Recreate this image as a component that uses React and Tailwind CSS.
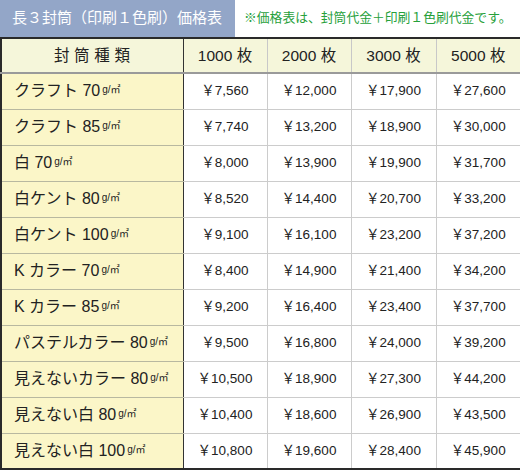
import React from 'react';

const rows = [
  ['クラフト 70', ['7,560', '12,000', '17,900', '27,600']],
  ['クラフト 85', ['7,740', '13,200', '18,900', '30,000']],
  ['白 70', ['8,000', '13,900', '19,900', '31,700']],
  ['白ケント 80', ['8,520', '14,400', '20,700', '33,200']],
  ['白ケント 100', ['9,100', '16,100', '23,200', '37,200']],
  ['K カラー 70', ['8,400', '14,900', '21,400', '34,200']],
  ['K カラー 85', ['9,200', '16,400', '23,400', '37,700']],
  ['パステルカラー 80', ['9,500', '16,800', '24,000', '39,200']],
  ['見えないカラー 80', ['10,500', '18,900', '27,300', '44,200']],
  ['見えない白 80', ['10,400', '18,600', '26,900', '43,500']],
  ['見えない白 100', ['10,800', '19,600', '28,400', '45,900']],
];

const font = { fontFamily: '"Liberation Sans", "Noto Sans CJK JP", sans-serif' };

const App = () => {
  return (
    <div className="w-[520px] h-[473px] bg-white text-[#222]" style={font}>
      <div className="flex items-center h-[37px]">
        <div className="w-[235px] shrink-0 h-full bg-[#93a6c8] text-white text-[15px] flex items-center pl-[12px] whitespace-nowrap">
          長３封筒（印刷１色刷）価格表
        </div>
        <div className="pl-[9px] pb-[2px] text-[12.8px] text-[#26a03a] whitespace-nowrap">
          ※価格表は、封筒代金＋印刷１色刷代金です。
        </div>
      </div>
      <table className="w-[520px] table-fixed border-collapse border-2 border-[#2a2a2a]">
        <colgroup>
          <col className="w-[182px]" />
          <col className="w-[84px]" />
          <col className="w-[84px]" />
          <col className="w-[85px]" />
          <col className="w-[85px]" />
        </colgroup>
        <thead>
          <tr className="h-[35px] bg-[#f5f6da] text-[15.5px]">
            <th className="font-normal border-r border-r-[#333] border-b-2 border-b-[#9a9a9a] tracking-[0.3em] pl-[4px]">封筒種類</th>
            {['1000', '2000', '3000', '5000'].map((n) => (
              <th key={n} className="font-normal border-l border-[#c8c8c8] border-b-2 border-b-[#9a9a9a]">
                {n} 枚
              </th>
            ))}
          </tr>
        </thead>
        <tbody>
          {rows.map(([label, prices]) => (
            <tr key={label} className="h-[36px]">
              <td className="bg-[#fbf6c8] border-r border-r-[#333] border-b border-b-[#b8b8a0] pl-[12px] text-[16px] whitespace-nowrap">
                {label}
                <span className="text-[10px] align-[3px] ml-[2px]">g/㎡</span>
              </td>
              {prices.map((p, i) => (
                <td key={i} className="border border-[#cccccc] text-center text-[13.5px]">
                  ￥{p}
                </td>
              ))}
            </tr>
          ))}
        </tbody>
      </table>
    </div>
  );
};

export default App;
